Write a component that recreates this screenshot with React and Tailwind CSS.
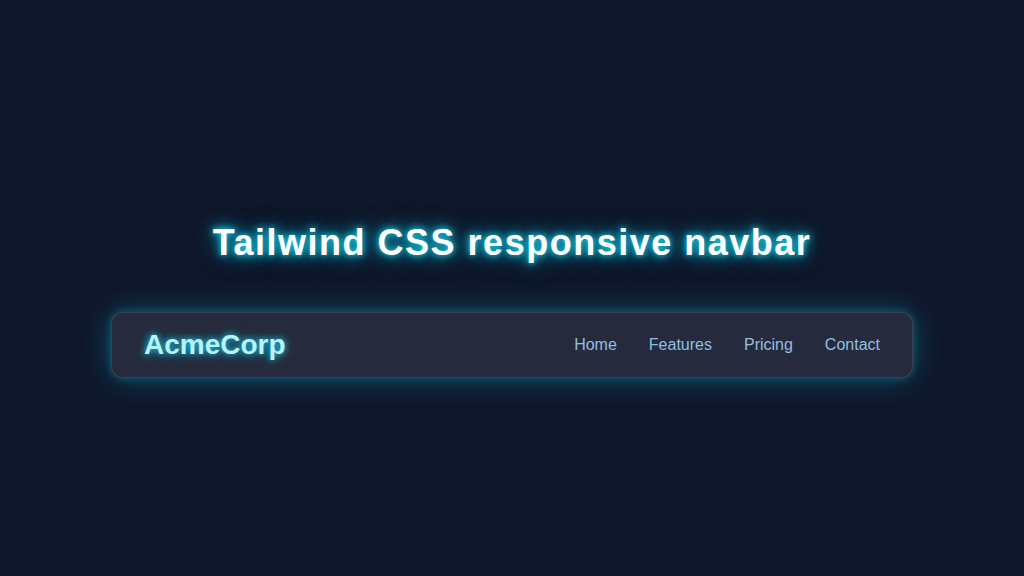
import React from 'react';

const links = ['Home', 'Features', 'Pricing', 'Contact'];

const App = () => {
  return (
    <div className="min-h-screen bg-[#0f172a] flex flex-col items-center justify-center pt-6 font-['Liberation_Sans',Arial,sans-serif]">
      <h1 className="text-4xl leading-10 font-bold tracking-[1.5px] text-white [text-shadow:0_0_6px_#22d3ee,0_0_14px_#06b6d4,0_0_24px_rgba(6,182,212,0.6)]">
        Tailwind CSS responsive navbar
      </h1>

      {/* Navbar */}
      <nav className="mt-[49px] w-[802px] h-[66px] flex items-center justify-between px-8 rounded-xl bg-[#252b3c] border border-white/10 shadow-[0_0_30px_rgba(8,145,178,0.45),0_0_8px_rgba(34,211,238,0.3)]">
        <div className="text-[28px] font-bold text-[#b6f2fa] [text-shadow:0_0_6px_rgba(34,211,238,0.9),0_0_12px_rgba(6,182,212,0.6)]">
          AcmeCorp
        </div>
        <ul className="flex items-center gap-8">
          {links.map((l) => (
            <li key={l}>
              <a href="#" className="text-base text-[#93bfe0] hover:text-cyan-300">
                {l}
              </a>
            </li>
          ))}
        </ul>
      </nav>
    </div>
  );
};

export default App;
